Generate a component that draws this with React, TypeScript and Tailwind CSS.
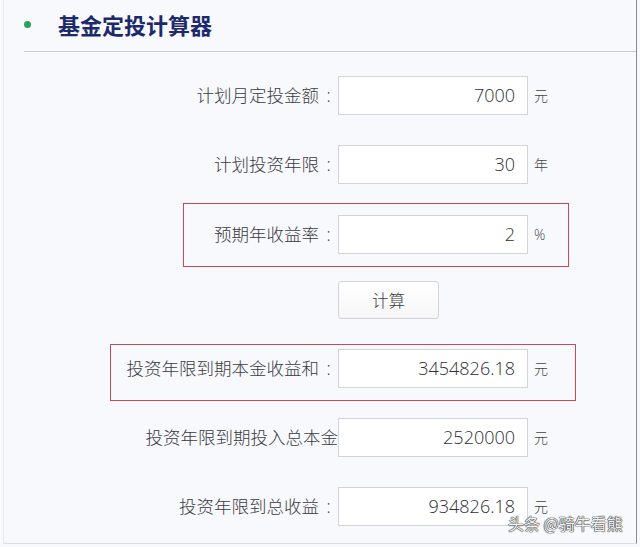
import React from "react";

type Row = {
  label: string;
  colon: boolean;
  value: string;
  unit: string;
  mt: string;
};

const rows1: Row[] = [
  { label: "计划月定投金额", colon: true, value: "7000", unit: "元", mt: "mt-[24px]" },
  { label: "计划投资年限", colon: true, value: "30", unit: "年", mt: "mt-[30px]" },
  { label: "预期年收益率", colon: true, value: "2", unit: "%", mt: "mt-[31px]" },
];

const rows2: Row[] = [
  { label: "投资年限到期本金收益和", colon: true, value: "3454826.18", unit: "元", mt: "mt-[30px]" },
  { label: "投资年限到期投入总本金", colon: false, value: "2520000", unit: "元", mt: "mt-[30px]" },
  { label: "投资年限到总收益", colon: true, value: "934826.18", unit: "元", mt: "mt-[30px]" },
];

function FormRow({ r }: { r: Row }) {
  return (
    <div className={`flex items-center h-[39px] ${r.mt}`}>
      <div className="w-[334px] flex justify-end items-center text-[17.5px] font-light text-[#3a3a42] leading-none">
        <span>{r.label}</span>
        {r.colon && <span className="w-[19px] text-center">:</span>}
      </div>
      <div className="w-[190px] h-[39px] border border-[#d3d4d8] bg-white flex items-center justify-end pr-[12px] text-[18px] font-light text-[#2e2e34]">
        {r.value}
      </div>
      <div className="ml-[6px] text-[14px] font-light text-[#444]">{r.unit}</div>
    </div>
  );
}

export default function App() {
  return (
    <div className="relative w-[640px] h-[547px] overflow-hidden bg-[#f8f9fc] font-['Open_Sans','Noto_Sans_CJK_SC',sans-serif]">
      <div className="ml-[3px] w-[634px] h-[544px] border-l border-r border-b border-l-[#e6e8ee] border-r-[#8c8c90] border-b-[#dcdde2]">
        {/* header */}
        <div className="h-[51px] flex items-center pb-[3px]">
          <div className="ml-[20px] w-[7px] h-[7px] rounded-full bg-[#22a55a]" />
          <div className="ml-[27px] text-[22px] font-bold text-[#1c2a6c] font-['Noto_Sans_CJK_SC',sans-serif] leading-none">
            基金定投计算器
          </div>
        </div>
        <div className="ml-[20px] h-px bg-[#c8cad2]" />

        {rows1.map((r) => (
          <FormRow key={r.label} r={r} />
        ))}

        <div className="mt-[27px] flex">
          <div className="w-[334px]" />
          <button className="w-[101px] h-[38px] border border-[#d2d3d8] rounded-[3px] bg-gradient-to-b from-white to-[#f6f6f8] text-[16.5px] font-light text-[#3a3a3a] font-['Noto_Sans_CJK_SC',sans-serif]">
            计算
          </button>
        </div>

        {rows2.map((r) => (
          <FormRow key={r.label} r={r} />
        ))}
      </div>

      {/* annotation boxes */}
      <div className="absolute left-[183px] top-[203px] w-[386px] h-[64px] border border-[#c94a55]" />
      <div className="absolute left-[110px] top-[344px] w-[466px] h-[57px] border border-[#c94a55]" />

      {/* watermark */}
      <div className="absolute left-[508px] top-[515px] text-[16px] leading-none text-[#f4f4f4] font-['Noto_Sans_CJK_SC',sans-serif] [text-shadow:0_0_1px_#222,0_0_1px_#222,0_0_1px_#222]">
        头条 @骑牛看熊
      </div>
    </div>
  );
}
